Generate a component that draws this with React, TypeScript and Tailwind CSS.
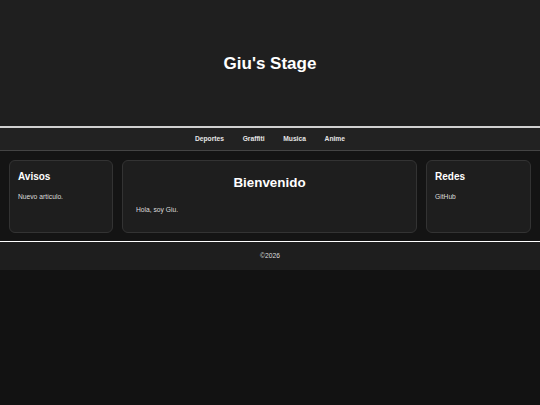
const links = ["Deportes", "Graffiti", "Musica", "Anime"]

export default function App() {
  return (
    <div className="min-h-[405px] bg-[#121212] font-['Liberation_Sans',Arial,sans-serif] text-white">
      {/* Cabecera */}
      <header className="h-[126px] bg-[#1f1f1f] flex items-center justify-center pt-[2px]">
        <h1 className="text-[17px] leading-[20px] font-bold">Giu's Stage</h1>
      </header>

      {/* Navegación */}
      <nav className="h-[25px] bg-[#222222] border-t-2 border-t-[#d0d0d0] border-b border-b-[#444444] flex items-center justify-center gap-[18.7px]">
        {links.map((l) => (
          <a key={l} href="#" className="text-[6.7px] leading-[8px] font-bold text-[#e6e6e6]">
            {l}
          </a>
        ))}
      </nav>

      {/* Contenido */}
      <main className="bg-[#141414] px-[9px] pt-[9px] pb-[8px]">
        <div className="grid grid-cols-[104px_1fr_105px] gap-[9px] h-[73px]">
          <section className="bg-[#1e1e1e] border border-[#333333] rounded-[6px] px-[8px] pt-[10px]">
            <h3 className="text-[10px] leading-[12px] font-bold">Avisos</h3>
            <p className="mt-[10px] text-[6.7px] leading-[8px] text-[#dddddd]">Nuevo artículo.</p>
          </section>

          <section className="bg-[#1e1e1e] border border-[#333333] rounded-[6px] px-[13px] pt-[14px]">
            <h2 className="text-center text-[13.4px] leading-[16px] font-bold">Bienvenido</h2>
            <p className="mt-[15px] text-[6.7px] leading-[8px] text-[#dddddd]">Hola, soy Giu.</p>
          </section>

          <section className="bg-[#1e1e1e] border border-[#333333] rounded-[6px] px-[8px] pt-[10px]">
            <h3 className="text-[10px] leading-[12px] font-bold">Redes</h3>
            <p className="mt-[10px] text-[6.7px] leading-[8px] text-[#dddddd]">GitHub</p>
          </section>
        </div>
      </main>

      {/* Pie */}
      <footer className="h-[29px] bg-[#1e1e1e] border-t border-t-white flex items-center justify-center">
        <p className="text-[6.7px] leading-[8px] text-[#dddddd]">©2026</p>
      </footer>
    </div>
  )
}
